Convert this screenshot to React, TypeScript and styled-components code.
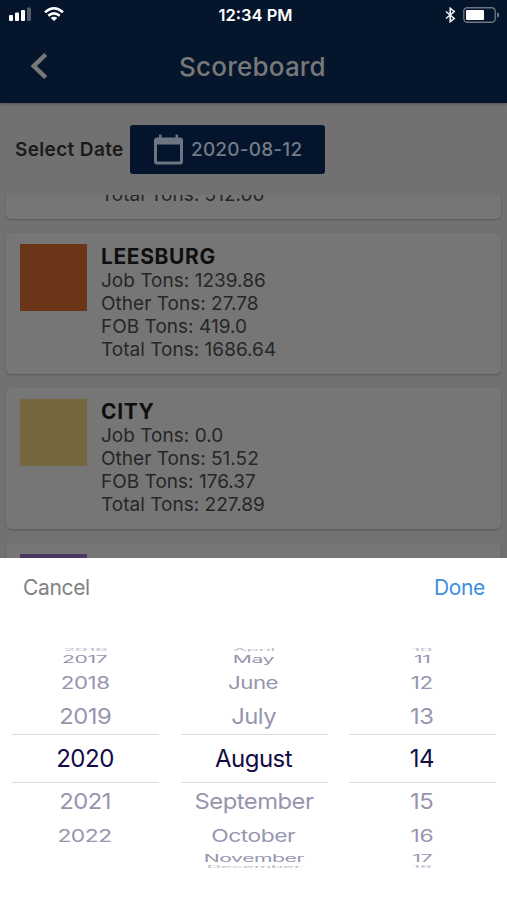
import React from "react";
import styled, { createGlobalStyle } from "styled-components";

const GlobalStyle = createGlobalStyle`
  * { box-sizing: border-box; }
  body {
    margin: 0;
    background: #717171;
    font-family: Inter, "Liberation Sans", sans-serif;
    overflow: hidden;
  }
`;

const Screen = styled.div`
  display: flex;
  flex-direction: column;
  width: 507px;
  height: 900px;
  overflow: hidden;
  background: #717171;
`;

const Header = styled.header`
  flex: none;
  height: 103px;
  background: #05152b;
  box-shadow: 0 1px 3px rgba(0, 0, 0, 0.3);
`;

const StatusBar = styled.div`
  display: grid;
  grid-template-columns: 1fr auto 1fr;
  align-items: center;
  height: 30px;
  padding: 0 7px 0 9px;
`;

const Signals = styled.div`
  display: flex;
  align-items: center;
  gap: 12px;
  padding-bottom: 1px;
`;

const Power = styled.div`
  display: flex;
  align-items: center;
  justify-content: flex-end;
  gap: 7px;
`;

const Clock = styled.div`
  color: #fff;
  font-size: 16.5px;
  font-weight: 600;
  letter-spacing: 0;
  line-height: 30px;
  margin-left: 2px;
`;

const TitleBar = styled.div`
  display: grid;
  grid-template-columns: 60px 1fr 60px;
  align-items: center;
  height: 73px;
`;

const BackButton = styled.button`
  display: flex;
  border: 0;
  padding: 0 0 2px 30px;
  background: none;
`;

const Title = styled.h1`
  margin: 0;
  color: #787878;
  font-size: 26px;
  font-weight: 500;
  letter-spacing: 0.2px;
  line-height: 71px;
  padding: 0 2px 1px 0;
  text-align: center;
`;

const Filter = styled.div`
  flex: none;
  display: flex;
  align-items: center;
  height: 92px;
  padding-left: 15px;
`;

const FilterLabel = styled.span`
  width: 115px;
  color: #1a1a1a;
  font-size: 19px;
  font-weight: 600;
  letter-spacing: 0.35px;
  white-space: nowrap;
`;

const DateButton = styled.button`
  display: flex;
  align-items: center;
  gap: 8px;
  width: 195px;
  height: 49px;
  padding: 0 0 0 24px;
  border: 0;
  border-radius: 3px;
  background: #04142d;
  color: #737b87;
  font-family: inherit;
  font-size: 19px;
  font-weight: 500;
  letter-spacing: 0.2px;
  white-space: nowrap;
`;

const List = styled.main`
  flex: none;
  height: 363px;
  overflow: hidden;
`;

const Cards = styled.div`
  display: flex;
  flex-direction: column;
  gap: 14px;
  margin-top: -117px;
  padding: 0 6px;
`;

const Card = styled.article`
  display: flex;
  flex: none;
  gap: 14px;
  height: 141px;
  padding: 11px 14px;
  border-radius: 5px;
  background: #767676;
  box-shadow: 0 1px 2px rgba(0, 0, 0, 0.22);
`;

const Swatch = styled.div<{ $color: string }>`
  width: 67px;
  height: 67px;
  background: ${(p) => p.$color};
`;

const CardText = styled.div`
  color: #262626;
  font-size: 19px;
  letter-spacing: 0.02px;
  line-height: 23px;
  white-space: nowrap;
`;

const PlantName = styled.h2`
  margin: 0;
  color: #0f0f0f;
  font-size: 21px;
  font-weight: 650;
  letter-spacing: 0.6px;
  line-height: 25px;
`;

const Sheet = styled.section`
  flex: 1;
  background: #fff;
`;

const SheetActions = styled.div`
  display: flex;
  justify-content: space-between;
  align-items: center;
  height: 90px;
  padding: 0 22px 31px 23px;
`;

const ActionButton = styled.button<{ $primary?: boolean }>`
  border: 0;
  padding: 0;
  background: none;
  color: ${(p) => (p.$primary ? "#3d8fe0" : "#828282")};
  font-family: inherit;
  font-size: 21px;
  letter-spacing: -0.35px;
`;

const Wheels = styled.div`
  display: grid;
  grid-template-columns: repeat(3, 147px);
  justify-content: space-between;
  height: 221px;
  padding: 0 11px 0 12px;
  overflow: hidden;
`;

const Wheel = styled.div`
  display: flex;
  flex-direction: column;
`;

const Slot = styled.div<{ $height: number; $selected: boolean }>`
  display: flex;
  flex: none;
  align-items: center;
  justify-content: center;
  height: ${(p) => p.$height}px;
  padding-right: 1px;
  padding-top: ${(p) => (p.$height < 10 ? 0 : p.$selected ? 1 : 2)}px;
  border: solid #dcdcde;
  border-width: ${(p) => (p.$selected ? "1px 0" : "0")};
  color: ${(p) => (p.$selected ? "#120b46" : "#9795ae")};
  opacity: ${(p) => (p.$height < 10 ? 0.65 : 1)};
`;

const SlotText = styled.span<{ $x: number; $y: number }>`
  font-size: 24px;
  letter-spacing: -0.5px;
  line-height: 28px;
  white-space: nowrap;
  transform: scale(${(p) => p.$x}, ${(p) => p.$y});
`;

const plants = [
  { name: "PLANT", color: "#55585c", job: "312.00", other: "0.0", fob: "0.0", total: "512.00" },
  { name: "LEESBURG", color: "#6b3618", job: "1239.86", other: "27.78", fob: "419.0", total: "1686.64" },
  { name: "CITY", color: "#75683f", job: "0.0", other: "51.52", fob: "176.37", total: "227.89" },
  { name: "", color: "#4b3861", job: "", other: "", fob: "", total: "" },
];

const slots = [
  { height: 4, x: 0.84, y: 0.12 },
  { height: 14, x: 0.88, y: 0.42 },
  { height: 32, x: 0.93, y: 0.71 },
  { height: 36, x: 0.99, y: 0.92 },
  { height: 49, x: 1, y: 1 },
  { height: 36, x: 0.99, y: 0.92 },
  { height: 32, x: 0.95, y: 0.71 },
  { height: 14, x: 0.88, y: 0.42 },
  { height: 4, x: 0.83, y: 0.12 },
];

const wheels = [
  ["2016", "2017", "2018", "2019", "2020", "2021", "2022", "", ""],
  ["April", "May", "June", "July", "August", "September", "October", "November", "December"],
  ["10", "11", "12", "13", "14", "15", "16", "17", "18"],
];

const CellularIcon = () => (
  <svg width="23" height="15" viewBox="0 0 23 15" fill="#fff">
    <rect x="0" y="8" width="4" height="6" rx="1" />
    <rect x="6" y="5.5" width="4" height="8.5" rx="1" />
    <rect x="12" y="3" width="4" height="11" rx="1" />
    <rect x="18" y="0.5" width="4" height="13.5" rx="1" opacity="0.3" />
  </svg>
);

const WifiIcon = () => (
  <svg width="20" height="15" viewBox="0 0 20 15" fill="none" stroke="#fff" strokeWidth="2.5">
    <path d="M1 5.2 Q10 -2.6 19 5.2" />
    <path d="M4.3 8.7 Q10 4 15.7 8.7" />
    <path d="M10 14 L6.7 10.9 Q10 8.4 13.3 10.9Z" fill="#fff" stroke="none" />
  </svg>
);

const BluetoothIcon = () => (
  <svg width="11" height="16" viewBox="0 0 11 16" fill="none" stroke="#eef0f4" strokeWidth="1.6">
    <path d="M1 4.5 L9.2 11.5 L5.2 14.7 V1.3 L9.2 4.5 L1 11.5" />
  </svg>
);

const BatteryIcon = () => (
  <svg width="37" height="16" viewBox="0 0 37 16">
    <rect x="0.8" y="0.8" width="31.4" height="14.4" rx="3.5" fill="none" stroke="#6c7684" strokeWidth="1.4" />
    <rect x="3" y="3" width="18" height="10" rx="1" fill="#fff" />
    <path d="M34 5.2 Q36.3 6 36.3 8 Q36.3 10 34 10.8Z" fill="#6c7684" />
  </svg>
);

const BackIcon = () => (
  <svg width="18" height="28" viewBox="0 0 18 28" fill="none" stroke="#787878" strokeWidth="4.5">
    <path d="M15.7 2.5 L3.8 14 L15.7 25.5" />
  </svg>
);

const CalendarIcon = () => (
  <svg width="29" height="31" viewBox="0 0 29 31">
    <path
      fill="#6d7582"
      fillRule="evenodd"
      d="M5 0.5h2.5v3h14v-3h2.5v3h2a3 3 0 0 1 3 3v21a3 3 0 0 1-3 3H3a3 3 0 0 1-3-3v-21a3 3 0 0 1 3-3h2zM3 10.5v17h23v-17z"
    />
  </svg>
);

export default function App() {
  return (
    <>
      <GlobalStyle />
      <Screen>
        <Header>
          <StatusBar>
            <Signals>
              <CellularIcon />
              <WifiIcon />
            </Signals>
            <Clock>12:34 PM</Clock>
            <Power>
              <BluetoothIcon />
              <BatteryIcon />
            </Power>
          </StatusBar>
          <TitleBar>
            <BackButton aria-label="Back">
              <BackIcon />
            </BackButton>
            <Title>Scoreboard</Title>
          </TitleBar>
        </Header>
        <Filter>
          <FilterLabel>Select Date</FilterLabel>
          <DateButton>
            <CalendarIcon />
            2020-08-12
          </DateButton>
        </Filter>
        <List>
          <Cards>
            {plants.map((plant) => (
              <Card key={plant.color}>
                <Swatch $color={plant.color} />
                {plant.name && (
                  <CardText>
                    <PlantName>{plant.name}</PlantName>
                    <div>Job Tons: {plant.job}</div>
                    <div>Other Tons: {plant.other}</div>
                    <div>FOB Tons: {plant.fob}</div>
                    <div>Total Tons: {plant.total}</div>
                  </CardText>
                )}
              </Card>
            ))}
          </Cards>
        </List>
        <Sheet>
          <SheetActions>
            <ActionButton>Cancel</ActionButton>
            <ActionButton $primary>Done</ActionButton>
          </SheetActions>
          <Wheels>
            {wheels.map((values) => (
              <Wheel key={values[4]}>
                {values.map((value, i) => (
                  <Slot key={i} $height={slots[i].height} $selected={i === 4}>
                    <SlotText $x={slots[i].x} $y={slots[i].y}>
                      {value}
                    </SlotText>
                  </Slot>
                ))}
              </Wheel>
            ))}
          </Wheels>
        </Sheet>
      </Screen>
    </>
  );
}
